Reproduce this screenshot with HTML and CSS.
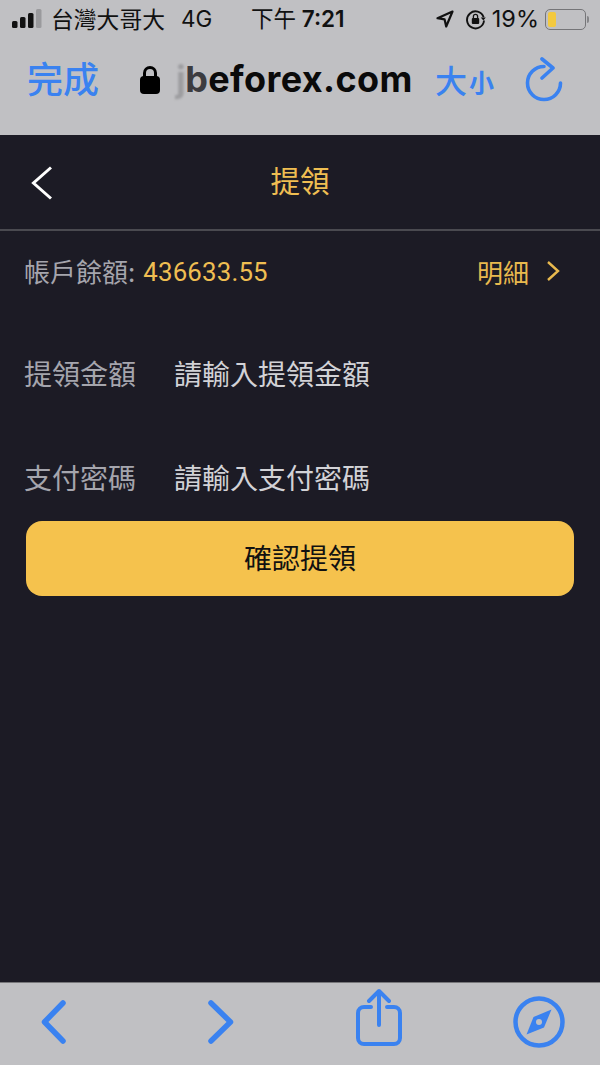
FILE: index.html
```html
<!DOCTYPE html>
<html lang="zh-Hant">
<head>
<meta charset="utf-8">
<title>提領</title>
<link rel="stylesheet" href="styles.css">
</head>
<body>
<div class="phone">
  <header class="chrome">
    <div class="status">
      <div class="status-left">
        <svg class="signal" width="32" height="20" viewBox="0 0 32 20"><rect x="0" y="12" width="5.5" height="7" rx="1.5" fill="#111"/><rect x="8" y="8" width="5.5" height="11" rx="1.5" fill="#111"/><rect x="16" y="4" width="5.5" height="15" rx="1.5" fill="#111"/><rect x="24" y="0" width="5.500" height="19" rx="1.5" fill="#9a9a9d"/></svg>
        <span class="carrier">台灣大哥大</span>
        <span class="net">4G</span>
      </div>
      <div class="clock"><span class="ampm">下午</span> 7:21</div>
      <div class="status-right">
        <svg class="loc" width="18" height="18" viewBox="0 0 18 18"><path d="M16.5 1.5 1.5 8.2 8.6 9.4 10.2 16.5Z" fill="none" stroke="#111" stroke-width="2.2" stroke-linejoin="round"/></svg>
        <svg class="rot" width="21" height="21" viewBox="0 0 21 21"><path d="M18.6 8.2A8.5 8.5 0 1 0 19 11.5" fill="none" stroke="#111" stroke-width="1.9"/><path d="M15.8 8.6h5l-2.5 3z" fill="#111"/><rect x="6.8" y="9" width="7.4" height="6" rx="1" fill="#111"/><path d="M8.4 9V7.4a2.1 2.1 0 0 1 4.2 0V9" fill="none" stroke="#111" stroke-width="1.3"/></svg>
        <span class="pct">19%</span>
        <div class="battery"><div class="battery-level"></div></div>
        <div class="battery-tip"></div>
      </div>
    </div>
    <div class="urlbar">
      <span class="done">完成</span>
      <div class="address">
        <svg class="lock" width="22" height="30" viewBox="0 0 22 30"><rect x="1" y="11" width="20" height="18" rx="4" fill="#000"/><path d="M5.5 12V8a5.5 5.5 0 0 1 11 0v4" fill="none" stroke="#000" stroke-width="3"/></svg>
        <span class="domain"><span class="mask-j">j</span><span class="mask-b">b</span>eforex.com</span>
      </div>
      <span class="textsize"><span class="big">大</span><span class="small">小</span></span>
      <svg class="reload" width="38" height="46" viewBox="0 0 38 46"><path d="M19 9.500A16.500 16.500 0 1 0 35.500 26" fill="none" stroke="#3a82f0" stroke-width="3.600" stroke-linecap="round"/><path d="M17 2 28 11 17 21" fill="none" stroke="#3a82f0" stroke-width="3.600" stroke-linecap="round" stroke-linejoin="round"/></svg>
    </div>
  </header>

  <main class="app">
    <div class="nav">
      <svg class="back" width="22" height="34" viewBox="0 0 22 34"><path d="M20 1.500 2.500 17 20 32.500" fill="none" stroke="#fff" stroke-width="3"/></svg>
      <h1 class="title">提領</h1>
    </div>
    <div class="balance">
      <div class="balance-left">
        <span class="muted balance-label">帳戶餘額:</span>
        <span class="amount">436633.55</span>
      </div>
      <div class="detail">
        <span>明細</span>
        <svg width="14" height="22" viewBox="0 0 14 22"><path d="M2 2 12 11 2 20" fill="none" stroke="#e8b94e" stroke-width="2.400"/></svg>
      </div>
    </div>
    <form class="form">
      <label class="field field-first">
        <span class="muted field-label">提領金額</span>
        <input class="field-input" type="text" placeholder="請輸入提領金額">
      </label>
      <label class="field">
        <span class="muted field-label">支付密碼</span>
        <input class="field-input" type="password" placeholder="請輸入支付密碼">
      </label>
      <button class="submit" type="button"><span class="submit-text">確認提領</span></button>
    </form>
  </main>

  <footer class="toolbar">
    <svg class="tool-back" width="28" height="46" viewBox="0 0 28 46"><path d="M24 4 5.500 23 24 42" fill="none" stroke="#3a82f0" stroke-width="5.500" stroke-linecap="round" stroke-linejoin="round"/></svg>
    <svg class="tool-forward" width="28" height="46" viewBox="0 0 28 46"><path d="M3 4 22.500 23 3 42" fill="none" stroke="#3a82f0" stroke-width="5.500" stroke-linecap="round" stroke-linejoin="round"/></svg>
    <svg class="tool-share" width="46" height="60" viewBox="0 0 46 60"><path d="M15 20H8a6 6 0 0 0-6 6v25a6 6 0 0 0 6 6h30a6 6 0 0 0 6-6V26a6 6 0 0 0-6-6h-7" fill="none" stroke="#3a82f0" stroke-width="4" stroke-linecap="round"/><path d="M23 38V5M13 14 23 4 33 14" fill="none" stroke="#3a82f0" stroke-width="4" stroke-linecap="round" stroke-linejoin="round"/></svg>
    <svg class="tool-compass" width="52" height="52" viewBox="0 0 52 52"><circle cx="26" cy="26" r="23.500" fill="none" stroke="#3a82f0" stroke-width="4.500"/><path d="M38.500 13.500 31 31.500 13.500 38.500 20.500 21Z" fill="#3a82f0"/><circle cx="26" cy="26" r="3" fill="#c0c0c3"/></svg>
  </footer>
</div>
</body>
</html>
```
FILE: styles.css
```css
* { box-sizing: border-box; }
html, body { margin: 0; padding: 0; }
body {
  width: 600px;
  height: 1065px;
  overflow: hidden;
  font-family: "Noto Sans CJK TC", "Liberation Sans", sans-serif;
}
.phone {
  display: flex;
  flex-direction: column;
  width: 600px;
  height: 1065px;
  background: #1c1b25;
}
.chrome {
  flex: 0 0 135px;
  background: #c0c0c3;
  color: #111;
  display: flex;
  flex-direction: column;
}
.status {
  height: 38px;
  padding: 0 11px 0 12px;
  display: grid;
  grid-template-columns: 240px 1fr 170px;
  align-items: center;
  font-size: 22px;
  line-height: 38px;
}
.status-left { display: flex; align-items: center; }
.signal { margin-right: 7px; }
.carrier { font-size: 22.800px; }
.net { margin-left: 16px; font-family: "Inter", sans-serif; font-size: 22.500px; }
.clock {
  margin-left: -1px;
  font-family: "Inter", "Noto Sans CJK TC", sans-serif;
  font-weight: 600;
  font-size: 22.500px;
  white-space: nowrap;
}
.ampm { font-weight: 400; }
.status-right { display: flex; align-items: center; justify-content: flex-end; }
.status-right svg { flex: none; }
.loc { margin-right: 11px; }
.rot { margin-right: 6px; }
.pct { font-family: "Inter", sans-serif; font-size: 23.500px; margin-right: 6px; white-space: nowrap; }
.battery {
  width: 41px;
  height: 21px;
  border: 1.500px solid #757578;
  border-radius: 5px;
  padding: 2px;
  flex: none;
}
.battery-level { width: 8px; height: 100%; background: #f3c93f; border-radius: 2px; }
.battery-tip { width: 2px; height: 7px; background: #858588; margin-left: 1px; border-radius: 0 2px 2px 0; flex: none; }
.urlbar {
  height: 84px;
  display: flex;
  align-items: center;
  padding: 0 36px 0 27px;
}
.done { font-size: 36px; line-height: 44px; color: #3a82f0; font-weight: 500; width: 112px; flex: none; margin-bottom: 7px; }
.address { display: flex; align-items: center; width: 296px; flex: none; }
.lock { margin-right: 15px; flex: none; }
.domain {
  font-family: "Inter", "Liberation Sans", sans-serif;
  font-size: 36px;
  line-height: 44px;
  font-weight: 700;
  color: #0a0a0a;
  letter-spacing: 0.4px;
  white-space: nowrap;
  margin-bottom: 3px;
}
.mask-j { color: #9d9da0; filter: blur(1px); margin-right: -1px; }
.mask-b { color: #3c3c40; }
.textsize { display: flex; align-items: flex-end; color: #3a82f0; width: 90px; flex: none; margin-bottom: 3px; }
.big { font-size: 32px; line-height: 40px; font-weight: 500; }
.small { font-size: 25px; line-height: 36px; margin-left: 2px; font-weight: 700; }
.reload { flex: none; }

.app { flex: 1; display: flex; flex-direction: column; }
.nav {
  height: 96px;
  display: flex;
  align-items: center;
  position: relative;
  justify-content: center;
  border-bottom: 2px solid #4a4a50;
}
.back { position: absolute; left: 31px; top: 31px; }
.title { margin: 0 0 6px; font-size: 29.500px; font-weight: 400; color: #efbe52; line-height: 40px; }
.balance {
  height: 84px;
  padding: 0 40px 4px 24px;
  display: flex;
  align-items: center;
  justify-content: space-between;
}
.balance-left { display: flex; align-items: center; }
.muted { color: #a5a5ad; }
.balance-label { font-size: 26px; margin-right: 8px; line-height: 36px; }
.amount { font-family: "Roboto", sans-serif; font-size: 25.800px; color: #efbe52; line-height: 36px; letter-spacing: 0.2px; margin-top: 2px; }
.detail { display: flex; align-items: center; gap: 17px; font-size: 26px; color: #e8b94e; }
.form { display: flex; flex-direction: column; padding: 0 26px; }
.field {
  display: flex;
  align-items: center;
  height: 104px;
  margin-left: -2px;
}
.field-first { margin-top: 6px; }
.field-label { font-size: 28px; width: 150px; flex: none; line-height: 40px; }
.field-input {
  flex: 1;
  min-width: 0;
  background: transparent;
  border: 0;
  outline: 0;
  padding: 0;
  font: inherit;
  font-size: 28px;
  line-height: 40px;
  color: #d8d8dc;
}
.field-input::placeholder { color: #d2d2d6; opacity: 1; }
.submit {
  height: 75px;
  margin-top: -8px;
  border: 0;
  border-radius: 16px;
  background: #f5c24d;
  color: #111;
  font: inherit;
  font-size: 28px;
  padding: 0 0 4px;
}
.toolbar {
  flex: 0 0 83px;
  background: #c0c0c3;
  border-top: 1px solid #77777a;
  display: flex;
  align-items: center;
  padding: 0 0 0 39px;
}
.tool-back, .tool-forward, .tool-compass { margin-bottom: 5px; }
.tool-forward { margin-left: 141px; }
.tool-share { margin-left: 120px; margin-bottom: 14px; }
.tool-compass { margin-left: 111px; }
```
